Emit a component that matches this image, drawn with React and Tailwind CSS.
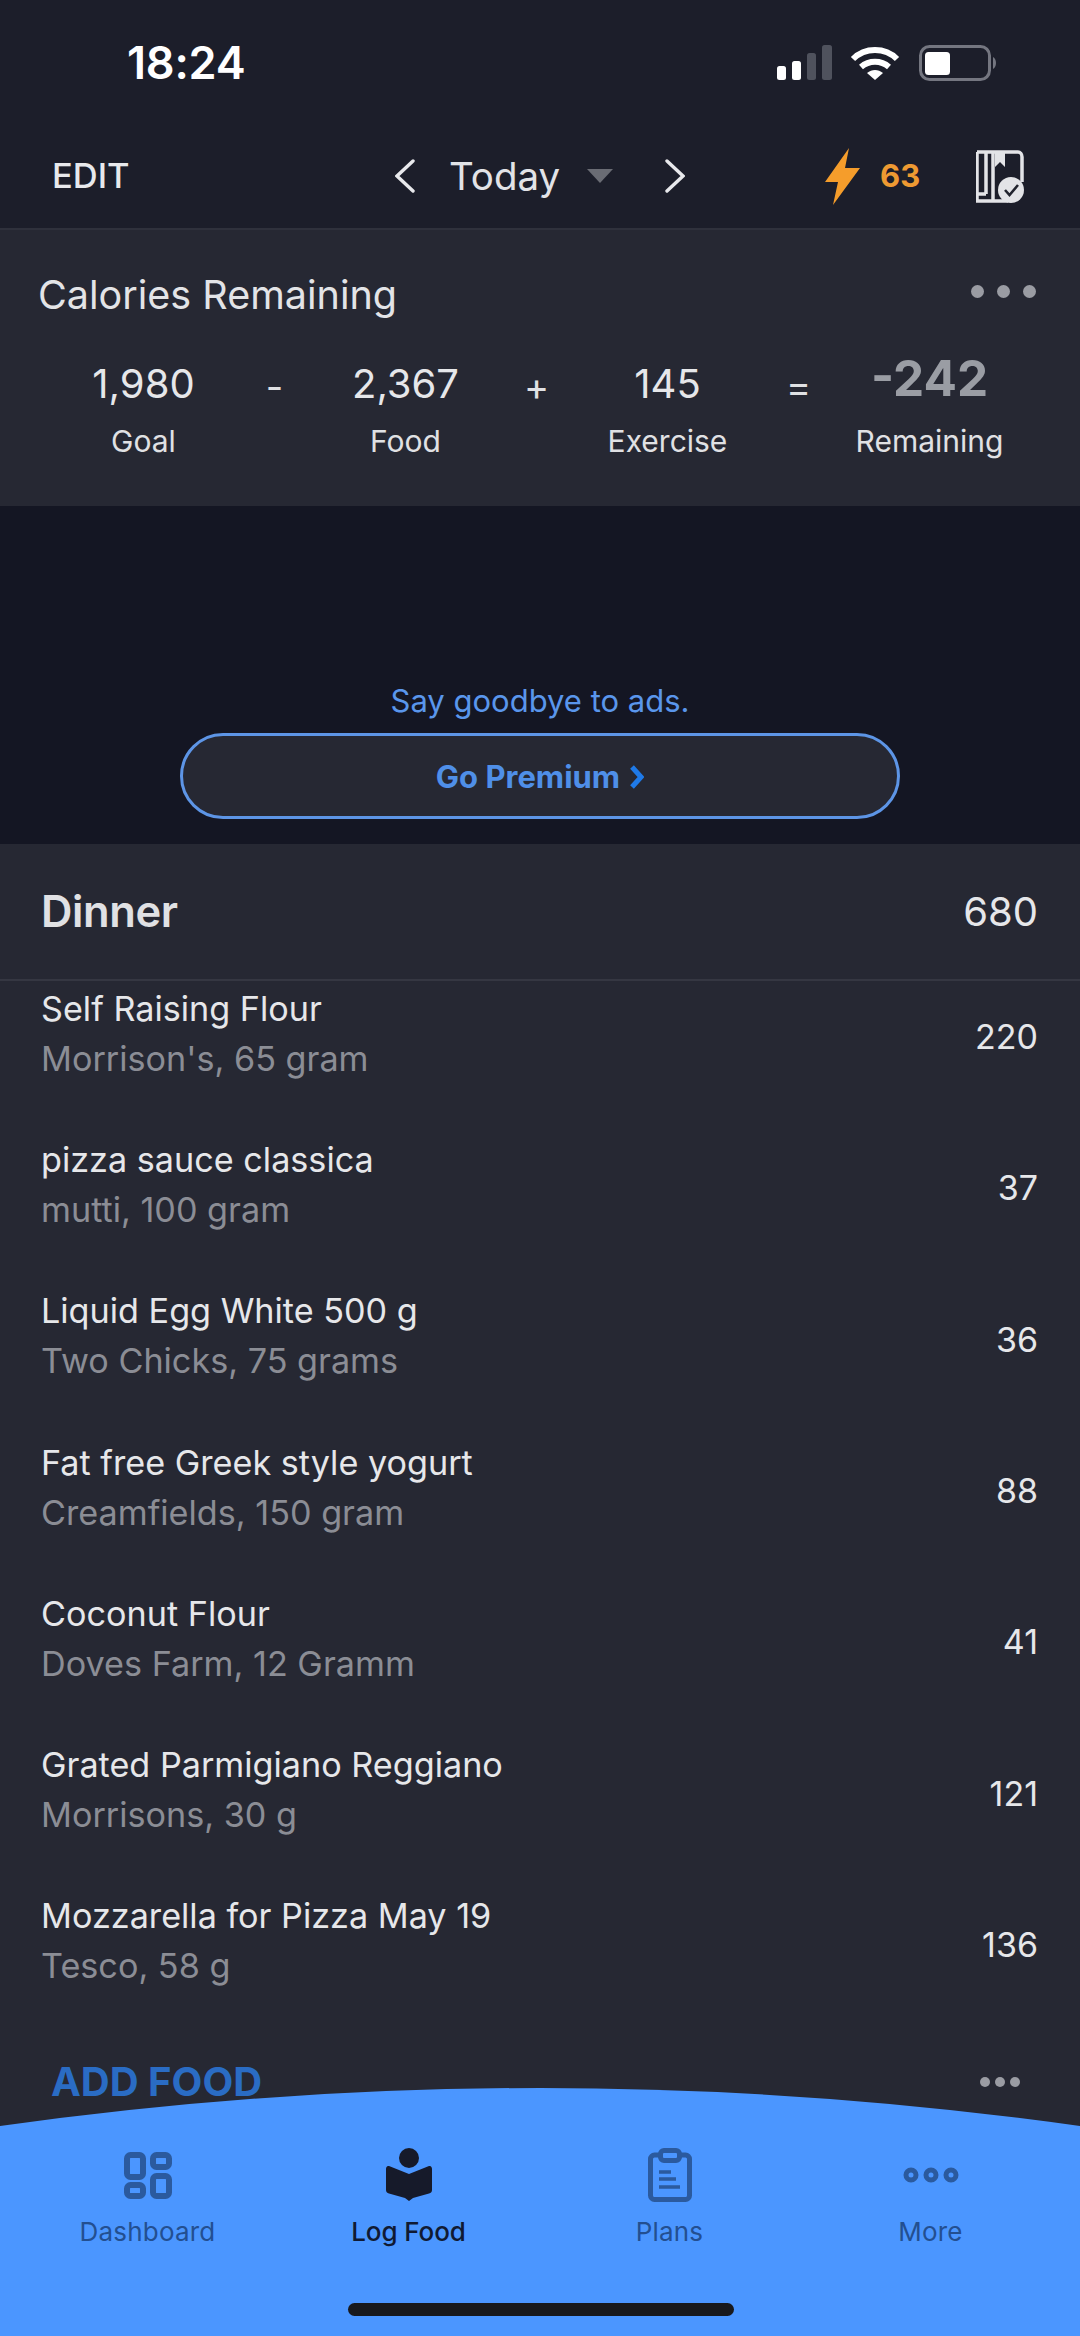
const foods = [
  { name: "Self Raising Flour", detail: "Morrison's, 65 gram", kcal: 220 },
  { name: "pizza sauce classica", detail: "mutti, 100 gram", kcal: 37 },
  { name: "Liquid Egg White 500 g", detail: "Two Chicks, 75 grams", kcal: 36 },
  { name: "Fat free Greek style yogurt", detail: "Creamfields, 150 gram", kcal: 88 },
  { name: "Coconut Flour", detail: "Doves Farm, 12 Gramm", kcal: 41 },
  { name: "Grated Parmigiano Reggiano", detail: "Morrisons, 30 g", kcal: 121 },
  { name: "Mozzarella for Pizza May 19", detail: "Tesco, 58 g", kcal: 136 },
];

function StatusBar() {
  return (
    <div className="flex h-[88px] items-end justify-between pl-[127px] pr-[82px]">
      <span className="text-[45px] leading-[51px] font-semibold tracking-[-0.2px] text-white">18:24</span>
      <div className="mb-[7px] flex items-center">
        <svg width="56" height="36" viewBox="0 0 56 36" fill="#fff">
          <rect x="1" y="21" width="9" height="14" rx="2.5" />
          <rect x="16" y="16" width="9" height="19" rx="2.5" />
          <rect x="31" y="8" width="9" height="27" rx="2.5" fill="#4f525d" />
          <rect x="46" y="0" width="10" height="35" rx="2.5" fill="#4f525d" />
        </svg>
        <svg className="ml-[18px]" width="50" height="36" viewBox="0 0 50 36" fill="none" stroke="#fff" strokeWidth="6">
          <path d="M3 14 C15 2 35 2 47 14" />
          <path d="M11 22 C19 15 31 15 39 22" />
          <path d="M17 28 L25 35 L33 28 C28 24 22 24 17 28 Z" fill="#fff" stroke="none" />
        </svg>
        <svg className="ml-[19px]" width="79" height="36" viewBox="0 0 79 36" fill="none">
          <rect x="1.5" y="1.5" width="69" height="33" rx="9" stroke="#747680" strokeWidth="3" />
          <rect x="6" y="7" width="25" height="23" rx="3.5" fill="#fff" />
          <path d="M74 12 C78 14 78 22 74 24 Z" fill="#747680" />
        </svg>
      </div>
    </div>
  );
}

function NavChevron({ flip }) {
  return (
    <svg width="20" height="34" viewBox="0 0 20 34" fill="none" stroke="#e8e9ec" strokeWidth="3.4" strokeLinecap="round">
      <path d={flip ? "M2 2 L18 17 L2 32" : "M18 2 L2 17 L18 32"} />
    </svg>
  );
}

function TopBar() {
  return (
    <div className="flex h-[142px] items-center border-b-2 border-[#2f313c] pl-[52px] pt-[36px]">
      <div className="w-[343px] shrink-0">
        <span className="text-[34.5px] font-medium text-[#e8e9ec]">EDIT</span>
      </div>
      <NavChevron />
      <span className="ml-[34px] w-[109px] shrink-0 whitespace-nowrap text-[38.5px] leading-[52px] text-[#e2e3e7]">Today</span>
      <svg className="ml-[29px]" width="26" height="14" viewBox="0 0 26 14">
        <path d="M0 0 H26 L13 14 Z" fill="#6a6c74" />
      </svg>
      <div className="ml-[52px]">
        <NavChevron flip />
      </div>
      <svg className="ml-[140px]" width="35" height="57" viewBox="0 0 35 57">
        <path d="M24 0 L0 34 H13 L8 57 L35 20 H20 Z" fill="#f59d2b" />
      </svg>
      <span className="ml-[20px] text-[31px] font-bold text-[#ee9a32]">63</span>
      <svg className="ml-[56px]" width="48" height="53" viewBox="0 0 48 53">
        <path
          d="M1 2 H42 C44 2 46 4 46 7 V32 M1 2 V51 H32 M10 2 V44 M1 44 H10 M17 2 V51"
          fill="none"
          stroke="#e3e4e7"
          strokeWidth="3.5"
        />
        <path d="M19 3 H29 V17 L24 12 L19 17 Z" fill="#e3e4e7" />
        <circle cx="35" cy="40" r="13" fill="#e3e4e7" />
        <path d="M29 40 L33.5 45 L42 35" fill="none" stroke="#22242e" strokeWidth="2.6" />
      </svg>
    </div>
  );
}

function Dots({ size, gap, color }) {
  return (
    <svg width={size * 6 + gap * 2} height={size * 2} viewBox={`0 0 ${size * 6 + gap * 2} ${size * 2}`} fill={color}>
      <circle cx={size} cy={size} r={size} />
      <circle cx={size * 3 + gap} cy={size} r={size} />
      <circle cx={size * 5 + gap * 2} cy={size} r={size} />
    </svg>
  );
}

function Stat({ value, label, strong }) {
  return (
    <div className="flex w-[131px] flex-col items-center whitespace-nowrap">
      <span
        className={
          strong
            ? "h-[58px] pt-[6px] text-[49.5px] leading-[48px] font-bold text-[#9a9da4]"
            : "h-[58px] pt-[11px] text-[40px] leading-[50px] text-[#e6e7ea]"
        }
      >
        {value}
      </span>
      <span className="mt-[15px] text-[30px] leading-[40px] text-[#e0e1e4]">{label}</span>
    </div>
  );
}

function Operator({ children }) {
  return (
    <div className="flex h-[58px] w-[131px] items-center justify-center pt-[18px] text-[38px] text-[#e0e1e4]">
      {children}
    </div>
  );
}

function CaloriesCard() {
  return (
    <div className="h-[276px] bg-[#262833] pt-[42px]">
      <div className="flex items-center justify-between pl-[38px] pr-[44px]">
        <span className="text-[39.5px] leading-[46px] text-[#e3e4e7]">Calories Remaining</span>
        <div className="-mt-[8px]">
          <Dots size={6.5} gap={13} color="#9a9ca3" />
        </div>
      </div>
      <div className="mt-[30px] flex pl-[78px]">
        <Stat value="1,980" label="Goal" />
        <Operator>-</Operator>
        <Stat value="2,367" label="Food" />
        <Operator>+</Operator>
        <Stat value="145" label="Exercise" />
        <Operator>=</Operator>
        <Stat value="-242" label="Remaining" strong />
      </div>
    </div>
  );
}

function AdBanner() {
  return (
    <div className="flex h-[338px] flex-col items-center justify-end bg-[#141623] pb-[25px]">
      <span className="text-[31px] leading-[40px] text-[#5a96ec]">Say goodbye to ads.</span>
      <div className="mt-[12px] flex h-[86px] w-[720px] items-center justify-center rounded-full border-[3px] border-[#5d95e6] bg-[#262833] pt-[2px]">
        <span className="text-[31px] font-bold text-[#4f8fe8]">Go Premium</span>
        <svg className="ml-[9px]" width="15" height="24" viewBox="0 0 15 24">
          <path d="M3 2 L12 12 L3 22" fill="none" stroke="#1f7ae8" strokeWidth="5" />
        </svg>
      </div>
    </div>
  );
}

function FoodRow({ food }) {
  return (
    <div className="flex h-[151.3px] items-center justify-between pl-[41px] pr-[42px]">
      <div className="flex flex-col pb-[6px]">
        <span className="text-[34.2px] leading-[50px] text-[#e6e7ea]">{food.name}</span>
        <span className="text-[34.2px] leading-[50px] text-[#8b8d95]">{food.detail}</span>
      </div>
      <span className="text-[34px] text-[#e6e7ea]">{food.kcal}</span>
    </div>
  );
}

function DinnerSection() {
  return (
    <div className="flex min-h-0 flex-1 flex-col bg-[#262833]">
      <div className="flex h-[137px] shrink-0 items-center justify-between border-b-2 border-[#353742] pl-[41px] pr-[42px]">
        <span className="text-[43.5px] font-semibold tracking-[-0.4px] text-[#e0e1e4]">Dinner</span>
        <span className="text-[40px] text-[#e6e7ea]">680</span>
      </div>
      <div className="min-h-0 flex-1 overflow-hidden">
        <div className="-mt-[20px]">
          {foods.map((food) => (
            <FoodRow key={food.name} food={food} />
          ))}
          <div className="flex items-center justify-between pl-[51px] pr-[60px] pt-[38px]">
            <span className="text-[40px] leading-[48px] font-bold text-[#2a6cc4]">ADD FOOD</span>
            <Dots size={5} gap={5} color="#9a9ca3" />
          </div>
        </div>
      </div>
    </div>
  );
}

function DashboardIcon() {
  return (
    <svg width="48" height="47" viewBox="0 0 48 47" fill="none" stroke="#2b5a9e" strokeWidth="6">
      <rect x="3" y="3" width="16" height="22" rx="3.5" />
      <rect x="29" y="3" width="16" height="12" rx="3.5" />
      <rect x="3" y="33" width="16" height="11" rx="3.5" />
      <rect x="29" y="24" width="16" height="20" rx="3.5" />
    </svg>
  );
}

function LogFoodIcon() {
  return (
    <svg width="46" height="54" viewBox="0 0 46 54" fill="#161a2a">
      <circle cx="23" cy="10" r="10" />
      <path d="M3 18 L23 26 L43 18 C45 17.5 46 19 46 21 V42 C46 44 45 45 43 45.5 L27 50 L23 53 L19 50 L3 45.5 C1 45 0 44 0 42 V21 C0 19 1 17.5 3 18 Z" />
    </svg>
  );
}

function PlansIcon() {
  return (
    <svg width="44" height="54" viewBox="0 0 44 54" fill="none" stroke="#2b5a9e">
      <rect x="2.5" y="7" width="39" height="44.5" rx="4" strokeWidth="5" />
      <rect x="12.5" y="2.5" width="19" height="10" rx="3.5" strokeWidth="5" fill="#4b96ff" />
      <path d="M11 24 H23 M11 31 H28 M11 39 H32" strokeWidth="3.5" />
    </svg>
  );
}

function MoreIcon() {
  return (
    <svg width="56" height="16" viewBox="0 0 56 16" fill="none" stroke="#2b5a9e" strokeWidth="5">
      <circle cx="8" cy="8" r="5" />
      <circle cx="28" cy="8" r="5" />
      <circle cx="48" cy="8" r="5" />
    </svg>
  );
}

const tabs = [
  { label: "Dashboard", icon: <DashboardIcon /> },
  { label: "Log Food", icon: <LogFoodIcon />, active: true },
  { label: "Plans", icon: <PlansIcon /> },
  { label: "More", icon: <MoreIcon /> },
];

function TabBar() {
  return (
    <div className="absolute bottom-0 left-0 h-[248px] w-full">
      <svg className="absolute inset-0" width="1080" height="248" viewBox="0 0 1080 248">
        <path d="M0 38 Q540 -38 1080 38 V248 H0 Z" fill="#4b96ff" />
      </svg>
      <div className="relative flex pl-[17px] pt-[60px]">
        {tabs.map((tab) => (
          <div key={tab.label} className="flex w-[261px] flex-col items-center">
            <div className="flex h-[54px] items-center justify-center">{tab.icon}</div>
            <span
              className={
                tab.active
                  ? "mt-[13px] text-[26px] leading-[34px] font-medium tracking-[-0.1px] text-[#101a33]"
                  : "mt-[13px] text-[26px] leading-[34px] tracking-[0.2px] text-[#234f90]"
              }
            >
              {tab.label}
            </span>
          </div>
        ))}
      </div>
      <div className="absolute bottom-[20px] left-[348px] h-[13px] w-[386px] rounded-full bg-[#18191d]" />
    </div>
  );
}

export default function App() {
  return (
    <div className="relative flex h-[2336px] w-[1080px] flex-col overflow-hidden bg-[#1c1e2a] font-['Inter',sans-serif]">
      <StatusBar />
      <TopBar />
      <CaloriesCard />
      <AdBanner />
      <DinnerSection />
      <TabBar />
    </div>
  );
}
